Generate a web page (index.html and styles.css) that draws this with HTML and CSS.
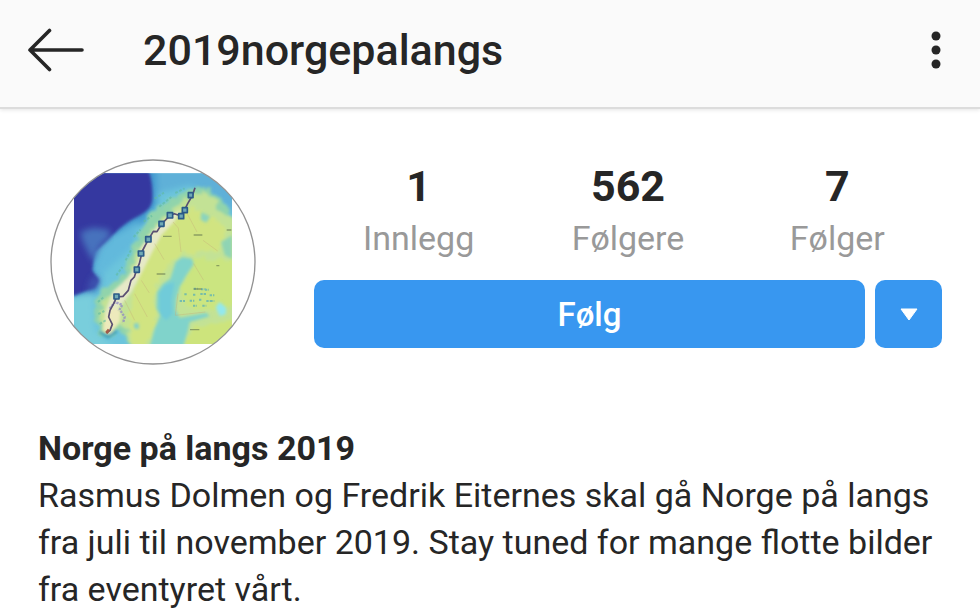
FILE: index.html
```html
<!DOCTYPE html>
<html lang="no">
<head>
  <meta charset="UTF-8" />
  <meta name="viewport" content="width=device-width, initial-scale=1" />
  <title>2019norgepalangs</title>
  <link rel="stylesheet" href="styles.css">
</head>
<body>
  <header class="topbar">
    <button class="icon-button" type="button" aria-label="Tilbake">
      <svg width="58" height="44" viewBox="0 0 58 44" fill="none" stroke="#262626" stroke-width="3.600" stroke-linecap="round" stroke-linejoin="round">
        <path d="M22.500 2.500 3 22 22.500 41.500M3 22H55" />
      </svg>
    </button>
    <h1 class="username">2019norgepalangs</h1>
    <button class="icon-button" type="button" aria-label="Mer">
      <svg width="10" height="38" viewBox="0 0 10 38" fill="#262626">
        <circle cx="5" cy="5" r="4.500" />
        <circle cx="5" cy="19" r="4.500" />
        <circle cx="5" cy="33" r="4.500" />
      </svg>
    </button>
  </header>

  <main>
    <section class="profile">
      <svg class="avatar" viewBox="31 26 618 618" role="img" aria-label="Kart over ruten">
        <defs>
          <clipPath id="circle"><circle cx="340" cy="335" r="305" /></clipPath>
          <clipPath id="map"><rect x="103" y="69" width="474" height="512" /></clipPath>
          <filter id="soft" x="-10%" y="-10%" width="120%" height="120%"><feGaussianBlur stdDeviation="9" /></filter>
          <filter id="edge" x="-10%" y="-10%" width="120%" height="120%"><feGaussianBlur stdDeviation="4" /></filter>
          <filter id="coast" x="-10%" y="-10%" width="120%" height="120%">
            <feTurbulence type="fractalNoise" baseFrequency=".05" numOctaves="2" seed="4" result="noise" />
            <feDisplacementMap in="SourceGraphic" in2="noise" scale="34" xChannelSelector="R" yChannelSelector="G" />
            <feGaussianBlur stdDeviation="4" />
          </filter>
          <filter id="line" x="-10%" y="-10%" width="120%" height="120%"><feGaussianBlur stdDeviation="1.500" /></filter>
        </defs>
        <circle cx="340" cy="335" r="306" fill="#fff" />
        <g clip-path="url(#circle)">
          <g clip-path="url(#map)">
            <rect x="103" y="69" width="474" height="512" fill="#6cc5dc" />

            <!-- sea -->
            <g filter="url(#soft)">
              <path d="M320 50H600V200L520 140 450 105 350 130Z" fill="#5fb0d8" />
              <path d="M90 50H350L352 165 310 222 262 245 225 290 180 345 172 430 90 445Z" fill="#4399cf" />
              <path d="M160 280 230 250 300 210 280 290 200 360 165 410Z" fill="#62b9dc" />
              <path d="M90 440 160 425 165 540 230 600H90Z" fill="#79cedc" />
            </g>
            <g filter="url(#edge)">
              <path d="M90 50H322C336 80 340 110 338 150C335 178 310 192 282 205C258 218 240 235 215 258L190 282 165 305 158 360 178 390 165 412 103 436H90Z" fill="#3639a0" />
            </g>
            <g filter="url(#soft)">
              <path d="M122 245 160 232 208 238 212 258 180 290 162 335 150 315 130 275Z" fill="#4672bd" />
              <path d="M160 375 182 388 172 412 140 422 150 398Z" fill="#3d55b0" />
            </g>

            <!-- land -->
            <g filter="url(#coast)">
              <path d="M165 455 185 425 215 400 250 370 265 325 280 280 310 235 330 195 380 155 430 125 475 108 535 135 550 160 577 180V600H270L262 560 240 535 215 560 180 550 168 500Z" fill="#91d4ab" />
              <path d="M190 450 235 420 270 385 295 305 330 250 365 205 405 175 450 140 485 122 528 150 525 175 595 210V600H275L262 535 238 520 212 550 190 540 182 490Z" fill="#c3e295" />
              <path d="M300 330 345 255 400 205 455 170 525 200 560 235 540 300 430 310 380 350 345 430 350 520 310 600H280L265 500Z" fill="#d1e481" />
              <path d="M465 320 590 330V470L520 480 440 470 420 420Z" fill="#cbe580" />
              <path d="M450 540 590 500V600H430Z" fill="#cde47c" />
            </g>
            <g filter="url(#edge)">
              <path d="M218 425 262 385 292 340 305 290 345 235 390 195 425 178 405 212 365 255 335 310 310 360 275 425 235 475 205 530 195 490Z" fill="#e6e9c8" />
              <path d="M195 500 218 470 243 480 240 515 210 550 190 540Z" fill="#edeabc" />
              <path d="M180 545 205 560 232 542" fill="none" stroke="#3e9fbc" stroke-width="9" />
            </g>

            <!-- gulf and lakes -->
            <g filter="url(#edge)">
              <path d="M408 335 428 320 457 325 462 342 440 375 420 410 410 445 408 480 420 502 500 488 510 498 450 515 445 540 430 590H330L345 535 362 495 350 475 352 425 370 400 392 385Z" fill="#80d3cb" />
              <path d="M375 405 405 395 395 450 398 490 380 510 360 490 358 430Z" fill="#6fcbd9" />
              <path d="M528 470 540 455 560 472 558 492 540 498Z" fill="#93e8ee" />
              <path d="M485 185 512 198 500 217 483 208Z" fill="#8bd4bd" />
              <path d="M545 275 577 255V325L555 315Z" fill="#8fd4b4" />
              <path d="M282 520 296 518 298 535 285 535Z" fill="#7ecfcd" />
            </g>
            <g filter="url(#line)" fill="none">
              <path d="M462 415h12m10 2h14m-38 16h10m12-2h18m10 4h14m-74 16h14m14-3h10m12 4h20m-60 14h12m16 0h12m-66-34h10m-24 20h16m60-34h12m4 34h12" stroke="#61b3b3" stroke-width="6" stroke-dasharray="7 3" stroke-opacity=".8" />
              <path d="M345 145l28-18m-14 42 36-29m12-12 28-14M312 214l25-18M282 260l20-22M258 330l18-35M230 375l18-25M175 455l16-14m-15 50 18-9m-14 39 18-11" stroke="#5fbb9f" stroke-width="6" stroke-dasharray="8 5" stroke-opacity=".6" />
              <path d="M210 475l16-20 22 9-11 18m6 0 12 18-5 18" stroke="#8b82c6" stroke-width="7" stroke-dasharray="7 3" stroke-opacity=".7" />
              <path d="M400 215l16 18 8 72M345 280l28 48M305 390l24 38M440 185l32 60M490 270l44 32M415 430l-8 65 90-10M462 340l30 50M285 430l38 70M255 450l30 60" stroke="#c5ae79" stroke-opacity=".4" stroke-width="3" />
              <path d="M370 258h26m66-4h26m-137 117h26m74 167h28m82-299h14m-45 107h9m-77 70h24" stroke="#677a50" stroke-width="4" stroke-opacity=".65" />
            </g>

            <!-- route -->
            <g filter="url(#line)" fill="none" stroke-linejoin="round">
              <path d="M466 112 458 136 444 160 434 180 424 197 404 190 391 195 366 221 352 244 341 243 326 268 308 302 299 340 291 358 284 380 274 390 266 420 250 438 231 440 222 460 211 480 207 500 218 522 211 540 200 548" stroke="#5a4f72" stroke-width="5" />
              <path d="M208 538 200 548" stroke="#a35b48" stroke-width="9" />
              <g fill="#6fa9b5" stroke="#2b5a88" stroke-width="5">
                <rect x="446" y="127" width="14" height="15" />
                <rect x="428" y="172" width="15" height="15" />
                <rect x="417" y="190" width="15" height="15" />
                <rect x="383" y="187" width="16" height="16" />
                <rect x="358" y="213" width="15" height="15" />
                <rect x="318" y="259" width="16" height="16" />
                <rect x="296" y="302" width="16" height="15" />
                <rect x="284" y="350" width="15" height="16" />
                <rect x="223" y="431" width="15" height="15" />
              </g>
            </g>
          </g>
        </g>
        <circle cx="340" cy="335" r="306" fill="none" stroke="#929292" stroke-width="4" />
      </svg>

      <div class="details">
        <ul class="stats">
          <li><strong>1</strong><span>Innlegg</span></li>
          <li><strong>562</strong><span>Følgere</span></li>
          <li><strong>7</strong><span>Følger</span></li>
        </ul>
        <div class="actions">
          <button class="follow" type="button">Følg</button>
          <button class="suggest" type="button" aria-label="Vis forslag">
            <svg width="18" height="13" viewBox="0 0 18 13"><path d="M1 1H17L9 12Z" fill="#fff" stroke="#fff" stroke-linejoin="round" /></svg>
          </button>
        </div>
      </div>
    </section>

    <section class="bio">
      <h2>Norge på langs 2019</h2>
      <p>Rasmus Dolmen og Fredrik Eiternes skal gå Norge på langs fra juli til november 2019. Stay tuned for mange flotte bilder fra eventyret vårt.</p>
    </section>
  </main>
</body>
</html>
```
FILE: styles.css
```css
* { box-sizing: border-box; }
body { margin: 0; background: #fff; color: #262626; font-family: Roboto, Arial, sans-serif; }
h1, h2, p, ul { margin: 0; padding: 0; }
button { border: 0; padding: 0; font-family: inherit; cursor: pointer; }
svg { display: block; }

.topbar { display: flex; align-items: center; height: 109px; padding: 0 39px 7px 27px; background: #fafafa; border-bottom: 2px solid #dcdcdc; box-shadow: 0 1px 4px #e4e4e4; }
.icon-button { background: none; }
.username { flex: 1; margin-left: 58px; font-size: 43px; line-height: 50px; font-weight: 500; }

.profile { display: flex; align-items: flex-start; gap: 58px; padding: 50px 38px 0 50px; }
.avatar { flex: none; width: 206px; height: 206px; }
.details { flex: 1; }
.stats { display: grid; grid-template-columns: repeat(3, 1fr); list-style: none; text-align: center; }
.stats li { display: flex; flex-direction: column; }
.stats strong { font-size: 43px; line-height: 54px; font-weight: 700; }
.stats span { color: #999; font-size: 34px; line-height: 50px; }

.actions { display: flex; gap: 10px; margin-top: 17px; }
.actions button { height: 68px; border-radius: 10px; background: #3897f0; color: #fff; }
.follow { flex: 1; font-size: 33px; font-weight: 500; }
.suggest { display: flex; align-items: center; justify-content: center; width: 67px; }

.bio { padding: 60px 38px 0; font-size: 34px; line-height: 47px; }
.bio h2 { font-size: inherit; font-weight: 700; }
```
